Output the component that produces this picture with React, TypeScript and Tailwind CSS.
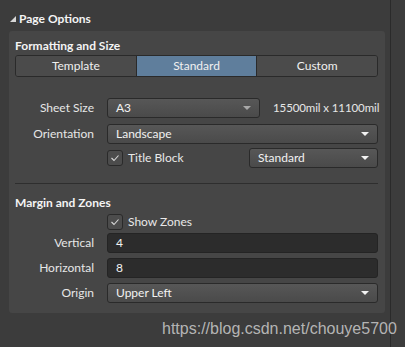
import React from 'react';

const font = { fontFamily: 'Lato, "Noto Sans", sans-serif' };

function Arrow({ dim = false }: { dim?: boolean }) {
  return (
    <svg width="8" height="4" viewBox="0 0 8 4" className="shrink-0">
      <path d="M0 0h8L4 4z" fill={dim ? '#a8a8a8' : '#f2f2f2'} />
    </svg>
  );
}

function Select({ value, className = '', dim = false }: { value: string; className?: string; dim?: boolean }) {
  return (
    <div
      className={`flex h-[20px] shrink-0 items-center justify-between rounded-[3px] border border-[#2a2a2a] bg-gradient-to-b from-[#575757] to-[#4a4a4a] pl-[8px] pr-[8px] text-[12px] leading-none text-[#f2f2f2] ${className}`}
    >
      <span>{value}</span>
      <Arrow dim={dim} />
    </div>
  );
}

function Check({ label }: { label: string }) {
  return (
    <div className="flex items-center gap-[5px] whitespace-nowrap text-[12px] leading-none text-[#e8e8e8]">
      <div className="flex h-[16px] w-[16px] items-center justify-center rounded-[3px] border border-[#2a2a2a] bg-[#4c4c4c]">
        <svg width="10" height="8" viewBox="0 0 10 8">
          <path d="M1.5 4l2.5 2.5L8.5 1.5" fill="none" stroke="#d8d8d8" strokeWidth="1.1" />
        </svg>
      </div>
      <span>{label}</span>
    </div>
  );
}

function Row({ label, children, className = '' }: { label: string; children: React.ReactNode; className?: string }) {
  return (
    <div className={`flex h-[20px] items-center ${className}`}>
      <div className="w-[80px] shrink-0 whitespace-nowrap pr-[1px] text-right text-[12px] leading-none text-[#e6e6e6]">{label}</div>
      <div className="ml-[12px] flex min-w-0 flex-1 items-center">{children}</div>
    </div>
  );
}

function Field({ value }: { value: string }) {
  return (
    <div className="flex h-[20px] flex-1 items-center rounded-[3px] border border-[#242424] bg-[#2c2c2c] pl-[8px] text-[12px] leading-none text-[#f2f2f2]">
      {value}
    </div>
  );
}

export default function App() {
  const tabs = ['Template', 'Standard', 'Custom'];
  return (
    <div className="relative h-[347px] w-[405px] overflow-hidden bg-[#3c3c3c]" style={font}>
      <div className="absolute left-[390px] top-0 h-full w-[1px] bg-[#2a2a2a]" />
      <div className="w-[385px] pl-[9px] pt-[11px]">
        <div className="flex h-[16px] items-center gap-[3px] pl-[1px] text-[12px] font-bold leading-none text-[#f4f4f4]">
          <svg width="6" height="6" viewBox="0 0 6 6">
            <path d="M6 0v6H0z" fill="#d8d8d8" />
          </svg>
          <span>Page Options</span>
        </div>
        <div className="mt-[4px] rounded-[3px] bg-[#464646] pb-[10px] pl-[6px] pr-[7px] pt-[7px]">
          <div className="flex h-[16px] items-center text-[12px] font-bold leading-none text-[#f4f4f4]">Formatting and Size</div>
          <div className="mt-[1px] flex h-[22px] overflow-hidden rounded-[3px] border border-[#2a2a2a]">
            {tabs.map((t, i) => (
              <div
                key={t}
                className={`flex flex-1 items-center justify-center text-[12px] leading-none text-[#f0f0f0] ${
                  i === 1 ? 'bg-[#5f7e9c]' : 'bg-[#4b4b4b]'
                } ${i > 0 ? 'border-l border-[#2a2a2a]' : ''}`}
              >
                {t}
              </div>
            ))}
          </div>

          <Row label="Sheet Size" className="mt-[21px]">
            <Select value="A3" className="w-[153px]" dim />
            <span className="ml-[13px] whitespace-nowrap text-[11.5px] leading-none tracking-[-0.1px] text-[#e6e6e6]">15500mil x 11100mil</span>
          </Row>
          <Row label="Orientation" className="mt-[6px]">
            <Select value="Landscape" className="flex-1" />
          </Row>
          <Row label="" className="mt-[4px]">
            <Check label="Title Block" />
            <Select value="Standard" className="ml-auto w-[129px]" />
          </Row>

          <div className="mt-[15px] h-[1px] bg-[#2e2e2e]" />

          <div className="mt-[11px] flex h-[16px] items-center text-[12px] font-bold leading-none text-[#f4f4f4]">Margin and Zones</div>
          <div className="mt-[3px] flex h-[16px] items-center pl-[92px]">
            <Check label="Show Zones" />
          </div>
          <Row label="Vertical" className="mt-[3px]">
            <Field value="4" />
          </Row>
          <Row label="Horizontal" className="mt-[5px]">
            <Field value="8" />
          </Row>
          <Row label="Origin" className="mt-[5px]">
            <Select value="Upper Left" className="flex-1" />
          </Row>
        </div>
      </div>
      <div
        className="absolute left-[162px] top-[321px] whitespace-nowrap text-[16px] leading-none text-[#c4c4c4]/90"
        style={{ fontFamily: '"Liberation Sans", Arial, sans-serif' }}
      >
        https://blog.csdn.net/chouye5700
      </div>
    </div>
  );
}
